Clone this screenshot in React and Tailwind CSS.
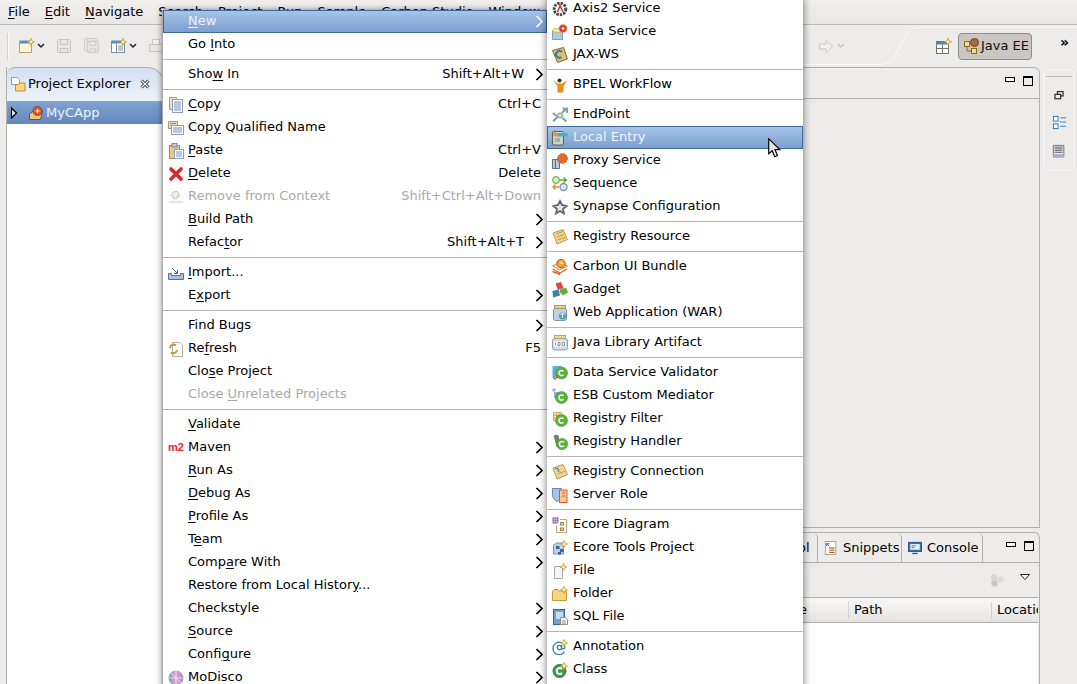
import React from 'react';

const Ic = ({ children, className = 'w-4 h-4 shrink-0' }) => (
  <svg viewBox="0 0 16 16" className={className}>{children}</svg>
);

const Star = ({ x = 12, y = 4 }) => (
  <path d={`M${x} ${y - 3.5}l1 2.500 2.500 1-2.500 1-1 2.500-1-2.500-2.500-1 2.500-1z`} fill="#fff3a8" stroke="#c9982a" strokeWidth="0.8" />
);

const GreenC = ({ x = 10.5, y = 10.5, r = 5.5 }) => (
  <g>
    <circle cx={x} cy={y} r={r} fill="#58b23a" stroke="#3f9428" strokeWidth="0.6" />
    <path d={`M${x + 2} ${y - 1.7}a2.600 2.600 0 1 0 0 3.400`} fill="none" stroke="#fff" strokeWidth="1.500" />
  </g>
);

const Page = ({ x, y, w, h, lines = 3 }) => (
  <g>
    <rect x={x + 0.5} y={y + 0.5} width={w} height={h} fill="#fff" stroke="#8e9bb0" />
    {Array.from({ length: lines }).map((_, i) => (
      <path key={i} d={`M${x + 2} ${y + 3 + i * 2}h${w - 3}`} stroke="#6d8fbc" />
    ))}
  </g>
);

const icons = {
  copy: <Ic><path d="M1.500 .5h7v12h-7z" fill="#e9dfc2" stroke="#a99a6c" /><Page x={4} y={2} w={10} h={13} lines={5} /></Ic>,
  copyq: <Ic><path d="M.5 1.500h9v7h-9z" fill="#e9dfc2" stroke="#a99a6c" /><path d="M2 3.500h6M2 5.500h6" stroke="#6d8fbc" /><Page x={3} y={5} w={12} h={9} lines={3} /></Ic>,
  paste: <Ic><rect x="1.500" y="2.500" width="10" height="13" fill="#e6c88f" stroke="#a58a52" /><rect x="4" y="0.5" width="5" height="3.500" fill="#bfc7d4" stroke="#7f8796" /><Page x={6} y={6} w={9} h={9} lines={3} /></Ic>,
  del: <Ic><path d="M3 3l10 10M13 3L3 13" stroke="#d8282a" strokeWidth="3.600" strokeLinecap="round" /></Ic>,
  remove: <Ic><path d="M5 3l4-1 3 5-3 0 1 2-4 1-1-3-2 0z" fill="#f0f0ee" stroke="#c4c4c0" /><path d="M1 13h14" stroke="#cfcfcb" /></Ic>,
  imp: <Ic><path d="M0.5 8.500h3v2h9v-2h3v6h-15z" fill="#a9c1de" stroke="#4f74a3" /><path d="M4 3l5 5M6 8.500h3.500V5" fill="none" stroke="#2e5f9e" /></Ic>,
  refresh: <Ic><path d="M4.500 1.500h7l3 3v11h-10z" fill="#fff" stroke="#b7b29c" /><path d="M2 7a3.600 3.600 0 0 1 6-2.400M9 9a3.600 3.600 0 0 1-6 2.400" fill="none" stroke="#c9932d" strokeWidth="2" /></Ic>,
  m2: <span className="w-4 shrink-0 text-[11px] leading-none font-bold text-[#ee1c25] font-['Liberation_Sans',sans-serif]">m2</span>,
  modisco: (
    <Ic>
      <defs><linearGradient id="disco" x1="0" x2="1"><stop offset="0" stopColor="#7fa0c9" /><stop offset="0.5" stopColor="#e2a4c9" /><stop offset="1" stopColor="#a48fd0" /></linearGradient></defs>
      <circle cx="8" cy="8" r="7.500" fill="url(#disco)" />
      <path d="M1 8h14M8 1v14M3 3l10 10" stroke="#fff" strokeOpacity="0.6" />
    </Ic>
  ),
  axis: <Ic><circle cx="8" cy="8" r="5.800" fill="none" stroke="#4a4a4a" strokeWidth="3" strokeDasharray="2.400 1" /><circle cx="8" cy="8" r="4" fill="#fff" /><path d="M5.500 11L8 4.500l3 6.500" fill="none" stroke="#c8333a" strokeWidth="1.500" /></Ic>,
  data: <Ic><path d="M.5 6.500h10v9H.5z" fill="#a8cbdd" stroke="#7ea2b6" /><ellipse cx="5.500" cy="6.500" rx="5" ry="2" fill="#f5e8b0" stroke="#c7b26c" /><circle cx="11" cy="4.500" r="4" fill="#d8403c" stroke="#f0b040" strokeDasharray="1.500 0.8" /><circle cx="11" cy="4.500" r="1.200" fill="#fff" /></Ic>,
  jax: <Ic><path d="M0.5 3.500l11-3 4 11.500-10 3.500z" fill="#dcbf6a" stroke="#7d6a31" /><path d="M10 5a3.400 3.400 0 1 0-.5 5" fill="none" stroke="#3d78a8" strokeWidth="2" /></Ic>,
  bpel: <Ic><circle cx="7.500" cy="3.500" r="2" fill="#3a2a17" /><path d="M1 2.500l4.500 4h4.500l5-3-3.500 6v6H5.500v-6z" fill="#ea8d1e" /></Ic>,
  endpoint: <Ic><path d="M1 14.500l5.500-5.500M10 6l4.500-4.500M10.500 1.500h4.500v4.500M1 6l3.500 3M10.500 11l4 3.500" stroke="#7f9cb8" strokeWidth="2" fill="none" /><circle cx="8" cy="8.500" r="2.500" fill="#cfe0d4" stroke="#6f9a80" /></Ic>,
  local: <Ic><rect x=".5" y="1.500" width="11" height="13.500" rx="1" fill="#d2d2cd" stroke="#5e5e5a" /><path d="M1.500 2l4.500 1.500-1.500 3.500-3-1.500z" fill="#ee8a1e" /><rect x="5.500" y="3" width="10" height="3.500" fill="#3fb6bb" /><path d="M3 9h5M3 11h5" stroke="#888" /></Ic>,
  proxy: <Ic><path d="M.5 6.500h7v9h-7z" fill="#b9c6d3" stroke="#5f7082" /><path d="M3.500 6.500v9" stroke="#5f7082" /><circle cx="10.500" cy="5.500" r="4.800" fill="#e26a2c" stroke="#c65318" strokeDasharray="2 0.8" /></Ic>,
  sequence: <Ic><circle cx="4" cy="4" r="3.300" fill="#d7efc4" stroke="#7cb558" strokeWidth="1.300" /><circle cx="11.500" cy="11" r="3.500" fill="#dbe6f2" stroke="#7892b4" strokeWidth="1.300" /><path d="M8 4h7M11.500 1.500L14.500 4l-3 2.500" stroke="#5ea93a" fill="none" strokeWidth="1.300" /><path d="M1 11h6M3.500 8.500L1 11l2.500 2.500" stroke="#e08a3b" fill="none" strokeWidth="1.300" /></Ic>,
  synapse: <Ic><path d="M8 2l2 4 4.500 1-3.500 3 1 4.500-4-2.500-4 2.500 1-4.500-3.500-3 4.500-1z" fill="#e6e8f0" stroke="#626672" strokeWidth="1.800" /></Ic>,
  resource: <Ic><path d="M1 4l10-3.500 4.500 10L5 15z" fill="#f0d48b" stroke="#b5995a" /><path d="M4 5l7-2.500M5 8l7-2.500M6 11l7-2.500" stroke="#c79a45" /></Ic>,
  carbon: <Ic><path d="M.5 7l7-4 8 4-8 4z" fill="#fbe0c2" stroke="#e0813a" /><path d="M.5 10l7.500 4 7-4M.5 12.500l7.500 3" fill="none" stroke="#e0612a" strokeWidth="1.400" /><circle cx="9" cy="4.500" r="4.200" fill="#f5a23f" stroke="#a85a1c" /><path d="M9 2.500v2h2" stroke="#fff" fill="none" /></Ic>,
  gadget: <Ic><path d="M3.500 1.500l5.500-1.500 2.500 6-5.500 2z" fill="#e8453c" /><path d="M8.500 6.500l6-.5 1.500 4.500-5 3-3.500-3.500z" fill="#69ac3e" /><path d="M.5 9l6-1.500 1.500 6-7 2z" fill="#3f7f9f" /></Ic>,
  war: <Ic><rect x="1.500" y="3.500" width="13" height="12" rx="2" fill="#bcd4e8" stroke="#7693ae" /><rect x="2.500" y="0.5" width="11" height="3" fill="#e2cf9b" stroke="#ab9a68" /><circle cx="10.500" cy="11" r="3.600" fill="#4f9fb0" /><path d="M10.500 8v5M8.500 10l2-2 2 2" stroke="#fff" fill="none" /></Ic>,
  jar: <Ic><rect x="0.5" y="3.500" width="15" height="11.500" rx="2.500" fill="#cfdbe8" stroke="#8ea0b6" /><rect x="2.500" y="0.5" width="11" height="3" fill="#e5d5a8" stroke="#b3a478" /><rect x="2" y="6.500" width="12" height="5" fill="#fff" /><path d="M3.500 7.500v3M6 7.500v3h2v-3zM10 7.500h2.500v3H10z" stroke="#777" fill="none" strokeWidth="0.8" /></Ic>,
  validator: <Ic><rect x="0.5" y="1" width="9" height="11" fill="#62aee3" /><GreenC x={9.5} y={8} r={6} /><path d="M1 12l2 2 4-4" stroke="#d6502a" fill="none" strokeWidth="1.300" /></Ic>,
  esb: <Ic><rect x="0.5" y="0.5" width="3" height="3" fill="#b6a3d6" /><rect x="2" y="4" width="4" height="6" fill="#8fb3dc" /><GreenC x={9.5} y={9.5} r={6} /></Ic>,
  filter: <Ic><path d="M1.500 1.500h8v8h-8zM1.500 4.500h8M1.500 7h8M4.500 1.500v8M7 1.500v8" fill="#fbe3c8" stroke="#e59a52" strokeWidth="0.9" /><GreenC x={9.5} y={9.5} r={6} /></Ic>,
  handler: <Ic><path d="M4 1l2.500 1v3L8 11 5 13 3 5 2 2z" fill="#7b7b78" stroke="#555" strokeWidth="0.6" /><GreenC x={10} y={10} r={5.600} /></Ic>,
  connection: <Ic><path d="M1 4l10-3.500 4.500 10L5 15z" fill="#f0d48b" stroke="#b5995a" /><path d="M3 4l3 1 1 3" stroke="#6a95c2" fill="none" strokeWidth="1.600" /><path d="M6 10l7-3" stroke="#c79a45" /></Ic>,
  role: <Ic><path d="M0.5 1.500h9v6c0 3.500-2 5.500-4.500 7-2.500-1.500-4.500-3.500-4.500-7z" fill="#a8c6e4" stroke="#6288b2" /><rect x="7.500" y="3" width="7.500" height="12.500" fill="#f6c89a" stroke="#d45c2a" /><path d="M10 6h3M10 9h3" stroke="#d45c2a" /></Ic>,
  diagram: <Ic><path d="M0.5 0.5h6v6h-6z" fill="#8a5cb0" /><path d="M0.5 2.500h6M0.5 4.500h6M2.500 .5v6M4.500.5v6" stroke="#d8c8e8" strokeWidth="0.6" /><path d="M8 2.500h6.500v13H4.500v-7" fill="#fff" stroke="#b8a878" /><rect x="8.500" y="5.500" width="3" height="2.500" fill="#f3e4b0" stroke="#9a8548" /><rect x="8.500" y="11" width="3" height="2.500" fill="#f3e4b0" stroke="#9a8548" /></Ic>,
  ecore: <Ic><path d="M1.500 5l3-2h7v11h-10z" fill="#bcd0e6" stroke="#7f98b8" /><rect x="4" y="6" width="3.500" height="3" fill="#35679f" /><rect x="8" y="9" width="3.500" height="3" fill="#35679f" /><rect x="6" y="12" width="3" height="2.500" fill="#35679f" /><Star x={12} y={4} /></Ic>,
  file: <Ic><path d="M2.500 3.500h8v12h-8z" fill="#f2f4f8" stroke="#a5a9b2" /><Star x={11.500} y={4} /></Ic>,
  folder: <Ic><path d="M.5 5.500l1.500-2h4l1 1.500h7.500v9.500H.5z" fill="#f6d57c" stroke="#c9993a" /><Star x={12} y={3.800} /></Ic>,
  sql: <Ic><rect x="1.500" y="0.5" width="11" height="15" fill="#6fa4d2" stroke="#2f6a9e" /><rect x="4" y="3" width="7" height="7" fill="#c8def0" /><path d="M8.500 8.500h5l2 2v5h-7z" fill="#fff" stroke="#998d62" /><path d="M10 12h4M10 14h4" stroke="#7b8aa0" /></Ic>,
  annotation: <Ic><path d="M12.500 12.500A6.200 6.200 0 1 1 13 7.500c0 3-3.500 3-3.500 1V6" fill="none" stroke="#3c7c9c" strokeWidth="1.300" /><circle cx="7.500" cy="8.500" r="2.200" fill="none" stroke="#3c7c9c" strokeWidth="1.300" /><Star x={12} y={4} /></Ic>,
  cls: <Ic><circle cx="7.500" cy="9" r="6.500" fill="#3f9a4b" stroke="#2d7538" /><path d="M10 7a3 3 0 1 0 0 4" fill="none" stroke="#fff" strokeWidth="2" /><Star x={12} y={4} /></Ic>,
};

// "&" marks the mnemonic letter
const Label = ({ text }) => {
  const i = text.indexOf('&');
  if (i < 0) return <span>{text}</span>;
  return (
    <span>
      {text.slice(0, i)}
      <span className="underline decoration-1 underline-offset-2">{text[i + 1]}</span>
      {text.slice(i + 2)}
    </span>
  );
};

const Chevron = ({ active }) => (
  <svg viewBox="0 0 9 13" className="absolute right-[3px] top-[5px] w-[9px] h-[13px]">
    <path d="M1.500 1l5.500 5.500L1.500 12" fill="none" stroke={active ? '#fff' : '#000'} strokeWidth="1.700" />
  </svg>
);

const Row = ({ item, gap }) => {
  const { l, k, a, off, hi, i } = item;
  const rowClass = hi
    ? 'ring-1 ring-inset ring-[#3f689c] bg-gradient-to-b from-[#a9c6e9] to-[#7a9dcf] text-[#eef3fa]'
    : off ? 'text-[#a9a9a7]' : 'text-black';
  return (
    <div className={`relative flex items-center h-[23px] pl-[5px] ${rowClass}`}>
      {i ? icons[i] : <span className="w-4 shrink-0" />}
      <span className={`${gap} pb-[2px] whitespace-nowrap`}><Label text={l} /></span>
      {k && <span className={a ? 'ml-auto mr-[23px] pb-[2px]' : 'ml-auto mr-[6px] pb-[2px]'}>{k}</span>}
      {a && <Chevron active={hi} />}
    </div>
  );
};

const Sep = () => (
  <div className="flex items-center h-[7px]"><div className="w-full h-px bg-[#b4b4b4]" /></div>
);

const menu1 = [
  { l: '&New', a: 1, hi: 1 }, { l: 'Go &Into' }, 0,
  { l: 'Sho&w In', k: 'Shift+Alt+W', a: 1 }, 0,
  { l: '&Copy', k: 'Ctrl+C', i: 'copy' }, { l: 'Cop&y Qualified Name', i: 'copyq' },
  { l: '&Paste', k: 'Ctrl+V', i: 'paste' }, { l: '&Delete', k: 'Delete', i: 'del' },
  { l: 'Remove from Context', k: 'Shift+Ctrl+Alt+Down', off: 1, i: 'remove' },
  { l: '&Build Path', a: 1 }, { l: 'Refac&tor', k: 'Shift+Alt+T', a: 1 }, 0,
  { l: '&Import...', i: 'imp' }, { l: 'E&xport', a: 1 }, 0,
  { l: 'Find Bugs', a: 1 }, { l: 'Re&fresh', k: 'F5', i: 'refresh' }, { l: 'Clo&se Project' },
  { l: 'Close &Unrelated Projects', off: 1 }, 0,
  { l: '&Validate' }, { l: 'Maven', a: 1, i: 'm2' }, { l: '&Run As', a: 1 }, { l: '&Debug As', a: 1 },
  { l: '&Profile As', a: 1 }, { l: 'T&eam', a: 1 }, { l: 'Comp&are With', a: 1 },
  { l: 'Restore from Local Histor&y...' }, { l: 'Checkstyle', a: 1 }, { l: '&Source', a: 1 },
  { l: 'Confi&gure', a: 1 }, { l: 'MoDisco', a: 1, i: 'modisco' },
];

const menu2 = [
  { l: 'Axis2 Service', i: 'axis' }, { l: 'Data Service', i: 'data' }, { l: 'JAX-WS', i: 'jax' }, 0,
  { l: 'BPEL WorkFlow', i: 'bpel' }, 0,
  { l: 'EndPoint', i: 'endpoint' }, { l: 'Local Entry', i: 'local', hi: 1 }, { l: 'Proxy Service', i: 'proxy' },
  { l: 'Sequence', i: 'sequence' }, { l: 'Synapse Configuration', i: 'synapse' }, 0,
  { l: 'Registry Resource', i: 'resource' }, 0,
  { l: 'Carbon UI Bundle', i: 'carbon' }, { l: 'Gadget', i: 'gadget' }, { l: 'Web Application (WAR)', i: 'war' }, 0,
  { l: 'Java Library Artifact', i: 'jar' }, 0,
  { l: 'Data Service Validator', i: 'validator' }, { l: 'ESB Custom Mediator', i: 'esb' },
  { l: 'Registry Filter', i: 'filter' }, { l: 'Registry Handler', i: 'handler' }, 0,
  { l: 'Registry Connection', i: 'connection' }, { l: 'Server Role', i: 'role' }, 0,
  { l: 'Ecore Diagram', i: 'diagram' }, { l: 'Ecore Tools Project', i: 'ecore' }, { l: 'File', i: 'file' },
  { l: 'Folder', i: 'folder' }, { l: 'SQL File', i: 'sql' }, 0,
  { l: 'Annotation', i: 'annotation' }, { l: 'Class', i: 'cls' },
];

const Down = ({ color = '#222' }) => (
  <svg viewBox="0 0 8 6" className="w-2 h-1.5"><path d="M1 1l3 3 3-3" fill="none" stroke={color} strokeWidth="1.500" /></svg>
);

const MinMax = () => (
  <div className="flex items-start gap-2">
    <div className="w-[10px] h-[5px] border border-black bg-white mt-[1px]" />
    <div className="w-[10px] h-[10px] border border-black border-t-2" />
  </div>
);

const SaveIcon = () => (
  <g fill="none" stroke="#c6c5c2"><rect x="1.500" y="1.500" width="13" height="13" rx="1" fill="#e8e7e5" /><path d="M4.500 1.500v5h7v-5M4.500 14.500v-4h7v4" /></g>
);

const Toolbar = () => (
  <div className="relative flex items-center justify-between h-[42px] shrink-0">
    <svg className="absolute right-0 top-0 w-[274px] h-[42px]" viewBox="0 0 274 42" fill="none">
      <path d="M0 39.500h77c12 0 14-8 20-18 6-11 10-19 17-19h160" stroke="#fbfbfa" />
    </svg>
    <div className="flex items-center pl-[7px]">
      <div className="w-[2px] h-[27px] bg-[#d2d1cf] border-r border-[#f8f8f7]" />
      <div className="ml-[10px] flex items-center gap-[2px]">
        <Ic className="w-4 h-4"><path d="M.5 4.500h12v10H.5z" fill="#fdf6d8" stroke="#b0a269" /><path d="M.5 2.500h11v3H.5z" fill="#5a8fc4" /><Star x={12} y={4} /></Ic>
        <Down />
      </div>
      <Ic className="w-4 h-4 ml-[11px]"><SaveIcon /></Ic>
      <Ic className="w-4 h-4 ml-[12px]"><g transform="translate(-1,-1)" opacity="0.8"><SaveIcon /></g><g transform="translate(2,2) scale(.85)"><SaveIcon /></g></Ic>
      <div className="ml-[11px] flex items-center gap-[2px]">
        <Ic className="w-4 h-4"><rect x=".5" y="3.500" width="13" height="11" fill="#fff" stroke="#7f8ea3" /><path d="M.5 2.500h12v3H.5z" fill="#5a8fc4" /><path d="M5.500 5.500v9M7 8h5M7 10h5M7 12h5" stroke="#7f8ea3" /><Star x={12} y={4} /></Ic>
        <Down />
      </div>
      <Ic className="w-4 h-4 ml-[11px]"><path d="M4.500 1.500h7v5h-7z" fill="#f2f1ef" stroke="#c6c5c2" /><rect x="1.500" y="6.500" width="13" height="7" fill="#e8e7e5" stroke="#c6c5c2" /></Ic>
    </div>
    <div className="relative flex items-center pr-[7px]">
      <div className="flex items-center gap-[3px] mr-[91px]">
        <Ic className="w-[15px] h-[15px]"><path d="M.5 5.500h7v-4l7 6.500-7 6.500v-4h-7z" fill="#f2f1ef" stroke="#c6c5c2" /></Ic>
        <Down color="#c6c5c2" />
      </div>
      <Ic className="w-4 h-4"><rect x=".5" y="3.500" width="12" height="12" fill="#fff" stroke="#6b7a60" /><path d="M.5 3.500h12v3H.5z" fill="#4f82ba" /><path d="M.5 10.500h12M6.500 6.500v9" stroke="#6b7a60" /><Star x={12} y={3.800} /></Ic>
      <div className="ml-[6px] flex items-center gap-[1px] w-[74px] h-[27px] pl-[5px] rounded-[4px] border border-[#8f8d88] bg-[#cac7c2] text-[#111]">
        <Ic className="w-4 h-4 shrink-0"><path d="M3 6v7h4" fill="none" stroke="#8a6a22" /><rect x=".5" y="3.500" width="5" height="5" fill="#f4dd8a" stroke="#8a6a22" /><rect x="7.500" y="10.500" width="5" height="5" fill="#f4dd8a" stroke="#8a6a22" /><circle cx="10.500" cy="4.500" r="4" fill="#a8693a" stroke="#6e3f1e" /></Ic>
        <span className="whitespace-nowrap">Java EE</span>
      </div>
      <div className="ml-[28px] mb-[8px] w-[10px] text-[14px] leading-none font-bold">»</div>
    </div>
  </div>
);

const TabIconSnippets = () => (
  <Ic className="w-[14px] h-[14px] shrink-0"><rect x="1.500" y=".5" width="12" height="15" fill="#fff" stroke="#a79f7c" /><path d="M3 3l3 3M3 3v3M3 3h3" stroke="#2e5f9e" fill="none" /><path d="M6 8h6" stroke="#d04b3c" strokeWidth="1.400" /><path d="M6 10.500h6" stroke="#46a04a" strokeWidth="1.400" /><path d="M6 13h6" stroke="#d04b3c" strokeWidth="1.400" /></Ic>
);

const TabIconConsole = () => (
  <Ic className="w-[14px] h-[14px] shrink-0"><rect x=".5" y="1.500" width="15" height="10.500" fill="#3a6ea8" stroke="#2a4f80" /><rect x="2.500" y="3.500" width="11" height="6.500" fill="#e5eef7" /><path d="M4 5.500h5M4 7.500h3" stroke="#3a6ea8" /><path d="M5 13.500h6v1.500H5z" fill="#2a4f80" /></Ic>
);

export default function App() {
  return (
    <div className="relative flex flex-col w-full h-screen overflow-hidden bg-[#edeceb] text-black text-[13px] font-['DejaVu_Sans',sans-serif]">
      {/* Menu bar */}
      <div className="flex items-center gap-[15px] h-[25px] shrink-0 pl-2 border-b border-[#bdbcba] bg-gradient-to-b from-[#f0efee] to-[#e9e8e6]">
        <Label text="&File" />
        <Label text="&Edit" />
        <Label text="&Navigate" />
        <span>Search</span><span>Project</span><span>Run</span><span>Sample</span><span>Carbon Studio</span><span>Window</span>
      </div>

      <Toolbar />

      {/* Workbench */}
      <div className="flex flex-1 min-h-0 pl-[6px]">
        <div className="flex flex-col w-[300px] border-l border-[#b2b1af] shrink-0">
          <div className="flex h-[34px] shrink-0">
            <div className="flex items-center w-[158px] pl-[3px] pb-[2px] border-t border-r border-[#b2b1af] rounded-tl-[8px] rounded-tr-[18px] bg-gradient-to-b from-[#d3e0f2] to-[#eef3f9]">
              <Ic className="w-4 h-4 shrink-0"><path d="M1.500 1.500h6l2 2v5h-8z" fill="#fff" stroke="#a79f7c" /><path d="M5.500 8.500h3l1-1.500h5.500v8h-9.500z" fill="#f6d57c" stroke="#b8923a" /></Ic>
              <span className="whitespace-nowrap ml-[2px]">Project Explorer</span>
              <svg viewBox="0 0 10 10" className="w-[10px] h-[10px] ml-[9px]"><path d="M1.500 1.500l7 7M8.500 1.500l-7 7" stroke="#222" strokeWidth="3" /><path d="M1.500 1.500l7 7M8.500 1.500l-7 7" stroke="#fff" strokeWidth="1.200" /></svg>
            </div>
          </div>
          <div className="flex-1 bg-white">
            <div className="flex items-center h-[23px] bg-gradient-to-b from-[#7fa3d2] to-[#6488bb] text-[#eef3fa]">
              <svg viewBox="0 0 8 12" className="w-2 h-3 ml-[3px]"><path d="M1.500 1l5 5-5 5z" fill="#eef3fa" stroke="#000" strokeWidth="1.300" /></svg>
              <Ic className="w-4 h-4 ml-[10px] shrink-0"><path d="M1.500 9l4-3h9l-2 8.500H1.500z" fill="#f6c77b" stroke="#3a5f95" /><circle cx="9.500" cy="6" r="4.500" fill="#d8602c" stroke="#8e3a18" /><path d="M7.500 6h4M9.500 4v4" stroke="#fff" /></Ic>
              <span className="ml-[2px]">MyCApp</span>
            </div>
          </div>
        </div>

        <div className="flex flex-col flex-1 min-w-0 ml-[4px] gap-[4px]">
          <div className="flex flex-col h-[461px] shrink-0 border-t border-r border-b border-[#b2b1af] rounded-tr-[6px]">
            <div className="flex justify-end h-[31px] shrink-0 pt-[8px] pr-[6px] border-b border-[#b2b1af]"><MinMax /></div>
          </div>
          <div className="flex flex-col flex-1 min-h-0 border-t border-r border-[#b2b1af] rounded-tr-[6px]">
            <div className="relative flex justify-between h-[30px] shrink-0 border-b border-[#b2b1af]">
              <div className="flex ml-auto mr-[56px]">
                <div className="flex items-center w-[20px] border-r border-[#b2b1af] rounded-tr-[5px] overflow-hidden"><span>ol</span></div>
                <div className="flex items-center gap-[5px] w-[84px] pl-[6px] border-r border-[#b2b1af] rounded-tr-[5px]"><TabIconSnippets /><span>Snippets</span></div>
                <div className="flex items-center gap-[5px] w-[81px] pl-[6px] border-r border-[#b2b1af] rounded-tr-[5px]"><TabIconConsole /><span>Console</span></div>
              </div>
              <div className="absolute right-[5px] top-[8px]"><MinMax /></div>
            </div>
            <div className="flex items-start justify-end gap-[16px] h-[34px] shrink-0 pt-[11px] pr-[9px]">
              <svg viewBox="0 0 14 13" className="w-[14px] h-[13px]"><circle cx="4" cy="3.500" r="3.200" fill="#d5d4d2" /><circle cx="10.500" cy="5.500" r="3.200" fill="#dcdbd9" /><circle cx="4.500" cy="9.500" r="3.200" fill="#c8c7c5" /></svg>
              <svg viewBox="0 0 10 6" className="w-[10px] h-[6px]"><path d="M.5 .5h9l-4.500 5z" fill="#fff" stroke="#222" /></svg>
            </div>
            <div className="flex flex-col flex-1 min-h-0 mr-[1px] border-t border-[#b2b1af]">
              <div className="flex items-center h-[25px] shrink-0 border-b border-[#b2b1af] bg-gradient-to-b from-[#f7f7f6] to-[#e5e4e2]">
                <div className="flex-1 text-right pr-[41px]">Resource</div>
                <div className="w-[143px] h-[17px] flex items-center pl-[5px] border-l border-[#d0cfcd]">Path</div>
                <div className="w-[47px] h-[17px] flex items-center pl-[5px] border-l border-[#d0cfcd] overflow-hidden whitespace-nowrap">Location</div>
              </div>
              <div className="flex-1 bg-white" />
            </div>
          </div>
        </div>

        <div className="w-[37px] shrink-0 pl-[3px] pr-[2px] pt-[2px]">
          <div className="flex flex-col items-center h-[102px] border border-[#fafaf9] rounded-[6px] shadow-[0_0_1px_#b5b5b3]">
            <div className="w-[26px] h-[2px] mt-[6px] border-t border-[#bdbcba]" />
            <Ic className="w-[10px] h-[10px] mt-[12px]"><rect x="5.500" y="2.500" width="9" height="7" fill="none" stroke="#333" strokeWidth="2" /><rect x="1.500" y="7" width="9" height="7" fill="#edeceb" stroke="#333" strokeWidth="2" /></Ic>
            <Ic className="w-[15px] h-[15px] mt-[15px]"><rect x="1.500" y="1.500" width="5" height="5" fill="#fff" stroke="#1f77bd" /><rect x="1.500" y="9.500" width="5" height="5" fill="#fff" stroke="#1f77bd" /><path d="M9 3h6M9 12h6M11 7.500h4" stroke="#1f77bd" /><rect x="8.500" y="6.500" width="1.500" height="1.500" fill="#1f77bd" /></Ic>
            <Ic className="w-[14px] h-[15px] mt-[14px]"><path d="M1.500 1h12v13h-12z" fill="#eeeef2" stroke="#666" /><path d="M3 3h9M3 5h9M3 7h9M3 9h9" stroke="#555" /><path d="M1.500 11h12v4h-12z" fill="#aaaad8" /></Ic>
          </div>
        </div>
      </div>

      {/* Context menu */}
      <div className="absolute left-[162px] top-[10px] w-[385px] bg-white border-l border-[#a8a8a8] shadow-[0_0_6px_rgba(0,0,0,0.5)]">
        {menu1.map((item, n) => (item ? <Row key={n} item={item} gap="ml-1" /> : <Sep key={n} />))}
      </div>

      {/* Submenu */}
      <div className="absolute left-[547px] top-[-3px] w-[256px] pb-[12px] bg-white shadow-[0_0_8px_rgba(0,0,0,0.55)]">
        {menu2.map((item, n) => (item ? <Row key={n} item={item} gap="ml-[5px]" /> : <Sep key={n} />))}
      </div>

      {/* Mouse pointer */}
      <svg viewBox="0 0 14 20" className="absolute left-[768px] top-[138px] w-[14px] h-[20px]">
        <path d="M.7 .7v15l3.500-3 2.500 6 2.800-1.200-2.500-5.800h4.700z" fill="#e4e6ea" stroke="#000" strokeWidth="1.200" />
      </svg>
    </div>
  );
}
